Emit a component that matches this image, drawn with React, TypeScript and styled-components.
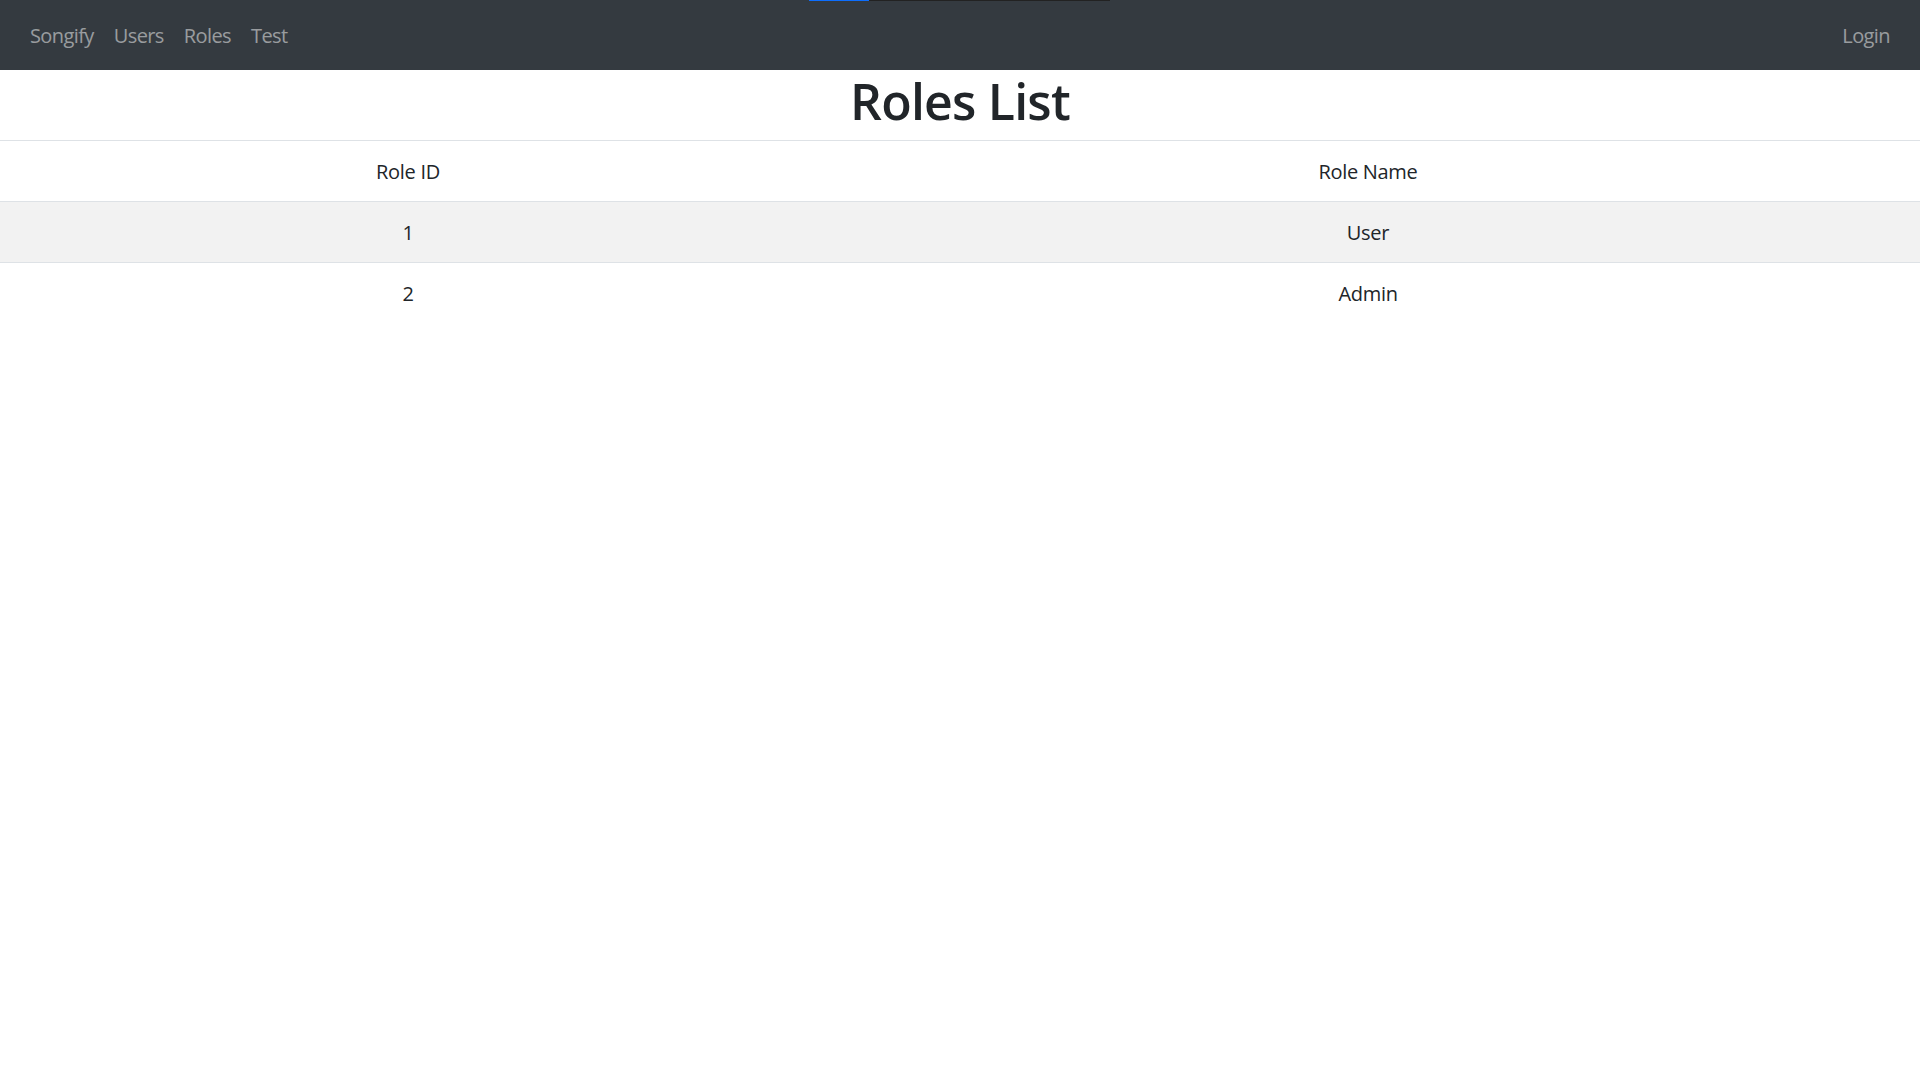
import styled, { createGlobalStyle } from 'styled-components'

const GlobalStyle = createGlobalStyle`
  * { box-sizing: border-box; }
  body {
    margin: 0;
    font-family: "Segoe UI", "Open Sans", "Noto Sans", sans-serif;
    font-size: 20px;
    line-height: 1.5;
    color: #212529;
    background: #fff;
  }
`

const Progress = styled.div`
  position: fixed;
  top: 0;
  left: 809px;
  width: 301px;
  height: 1px;
  background: #222;
  z-index: 10;
`
const ProgressFill = styled.div`
  height: 100%;
  background: #0d6efd;
`

const Navbar = styled.nav`
  height: 70px;
  background: #343a40;
  display: flex;
  align-items: center;
  justify-content: space-between;
  padding: 11px 20px 9px;
`
const NavList = styled.div`
  display: flex;
`
const NavLink = styled.a`
  display: block;
  padding: 10px;
  color: rgba(255, 255, 255, 0.5);
  text-decoration: none;
  font-size: 20px;
  line-height: 30px;
  letter-spacing: -0.6px;
  cursor: pointer;
`

const Title = styled.h1`
  margin: 0 0 10px;
  padding-top: 1px;
  height: 60px;
  font-size: 50px;
  font-weight: 600;
  line-height: 1.2;
  letter-spacing: -0.8px;
  text-align: center;
`

const Table = styled.table`
  width: 100%;
  border-collapse: collapse;
  text-align: center;
  letter-spacing: -0.3px;
`
const Th = styled.th<{ $w?: string }>`
  font-weight: 400;
  padding: 16px 15px 14px;
  border-top: 1px solid #dee2e6;
  border-bottom: 1px solid #dee2e6;
  width: ${({ $w }) => $w || 'auto'};
`
const Tr = styled.tr<{ $striped?: boolean }>`
  background: ${({ $striped }) => ($striped ? 'rgba(0,0,0,.05)' : 'transparent')};
`
const Td = styled.td`
  padding: 16px 15px 14px;
  border-top: 1px solid #dee2e6;
`

const roles = [
  { id: 1, name: 'User' },
  { id: 2, name: 'Admin' },
]

export default function App() {
  return (
    <>
      <GlobalStyle />
      <Progress><ProgressFill style={{ width: '20%' }} /></Progress>
      <Navbar>
        <NavList>
          <NavLink>Songify</NavLink>
          <NavLink>Users</NavLink>
          <NavLink>Roles</NavLink>
          <NavLink>Test</NavLink>
        </NavList>
        <NavList>
          <NavLink>Login</NavLink>
        </NavList>
      </Navbar>
      <Title>Roles List</Title>
      <Table>
        <thead>
          <tr>
            <Th $w="42.5%">Role ID</Th>
            <Th>Role Name</Th>
          </tr>
        </thead>
        <tbody>
          {roles.map((r, i) => (
            <Tr key={r.id} $striped={i % 2 === 0}>
              <Td>{r.id}</Td>
              <Td>{r.name}</Td>
            </Tr>
          ))}
        </tbody>
      </Table>
    </>
  )
}
